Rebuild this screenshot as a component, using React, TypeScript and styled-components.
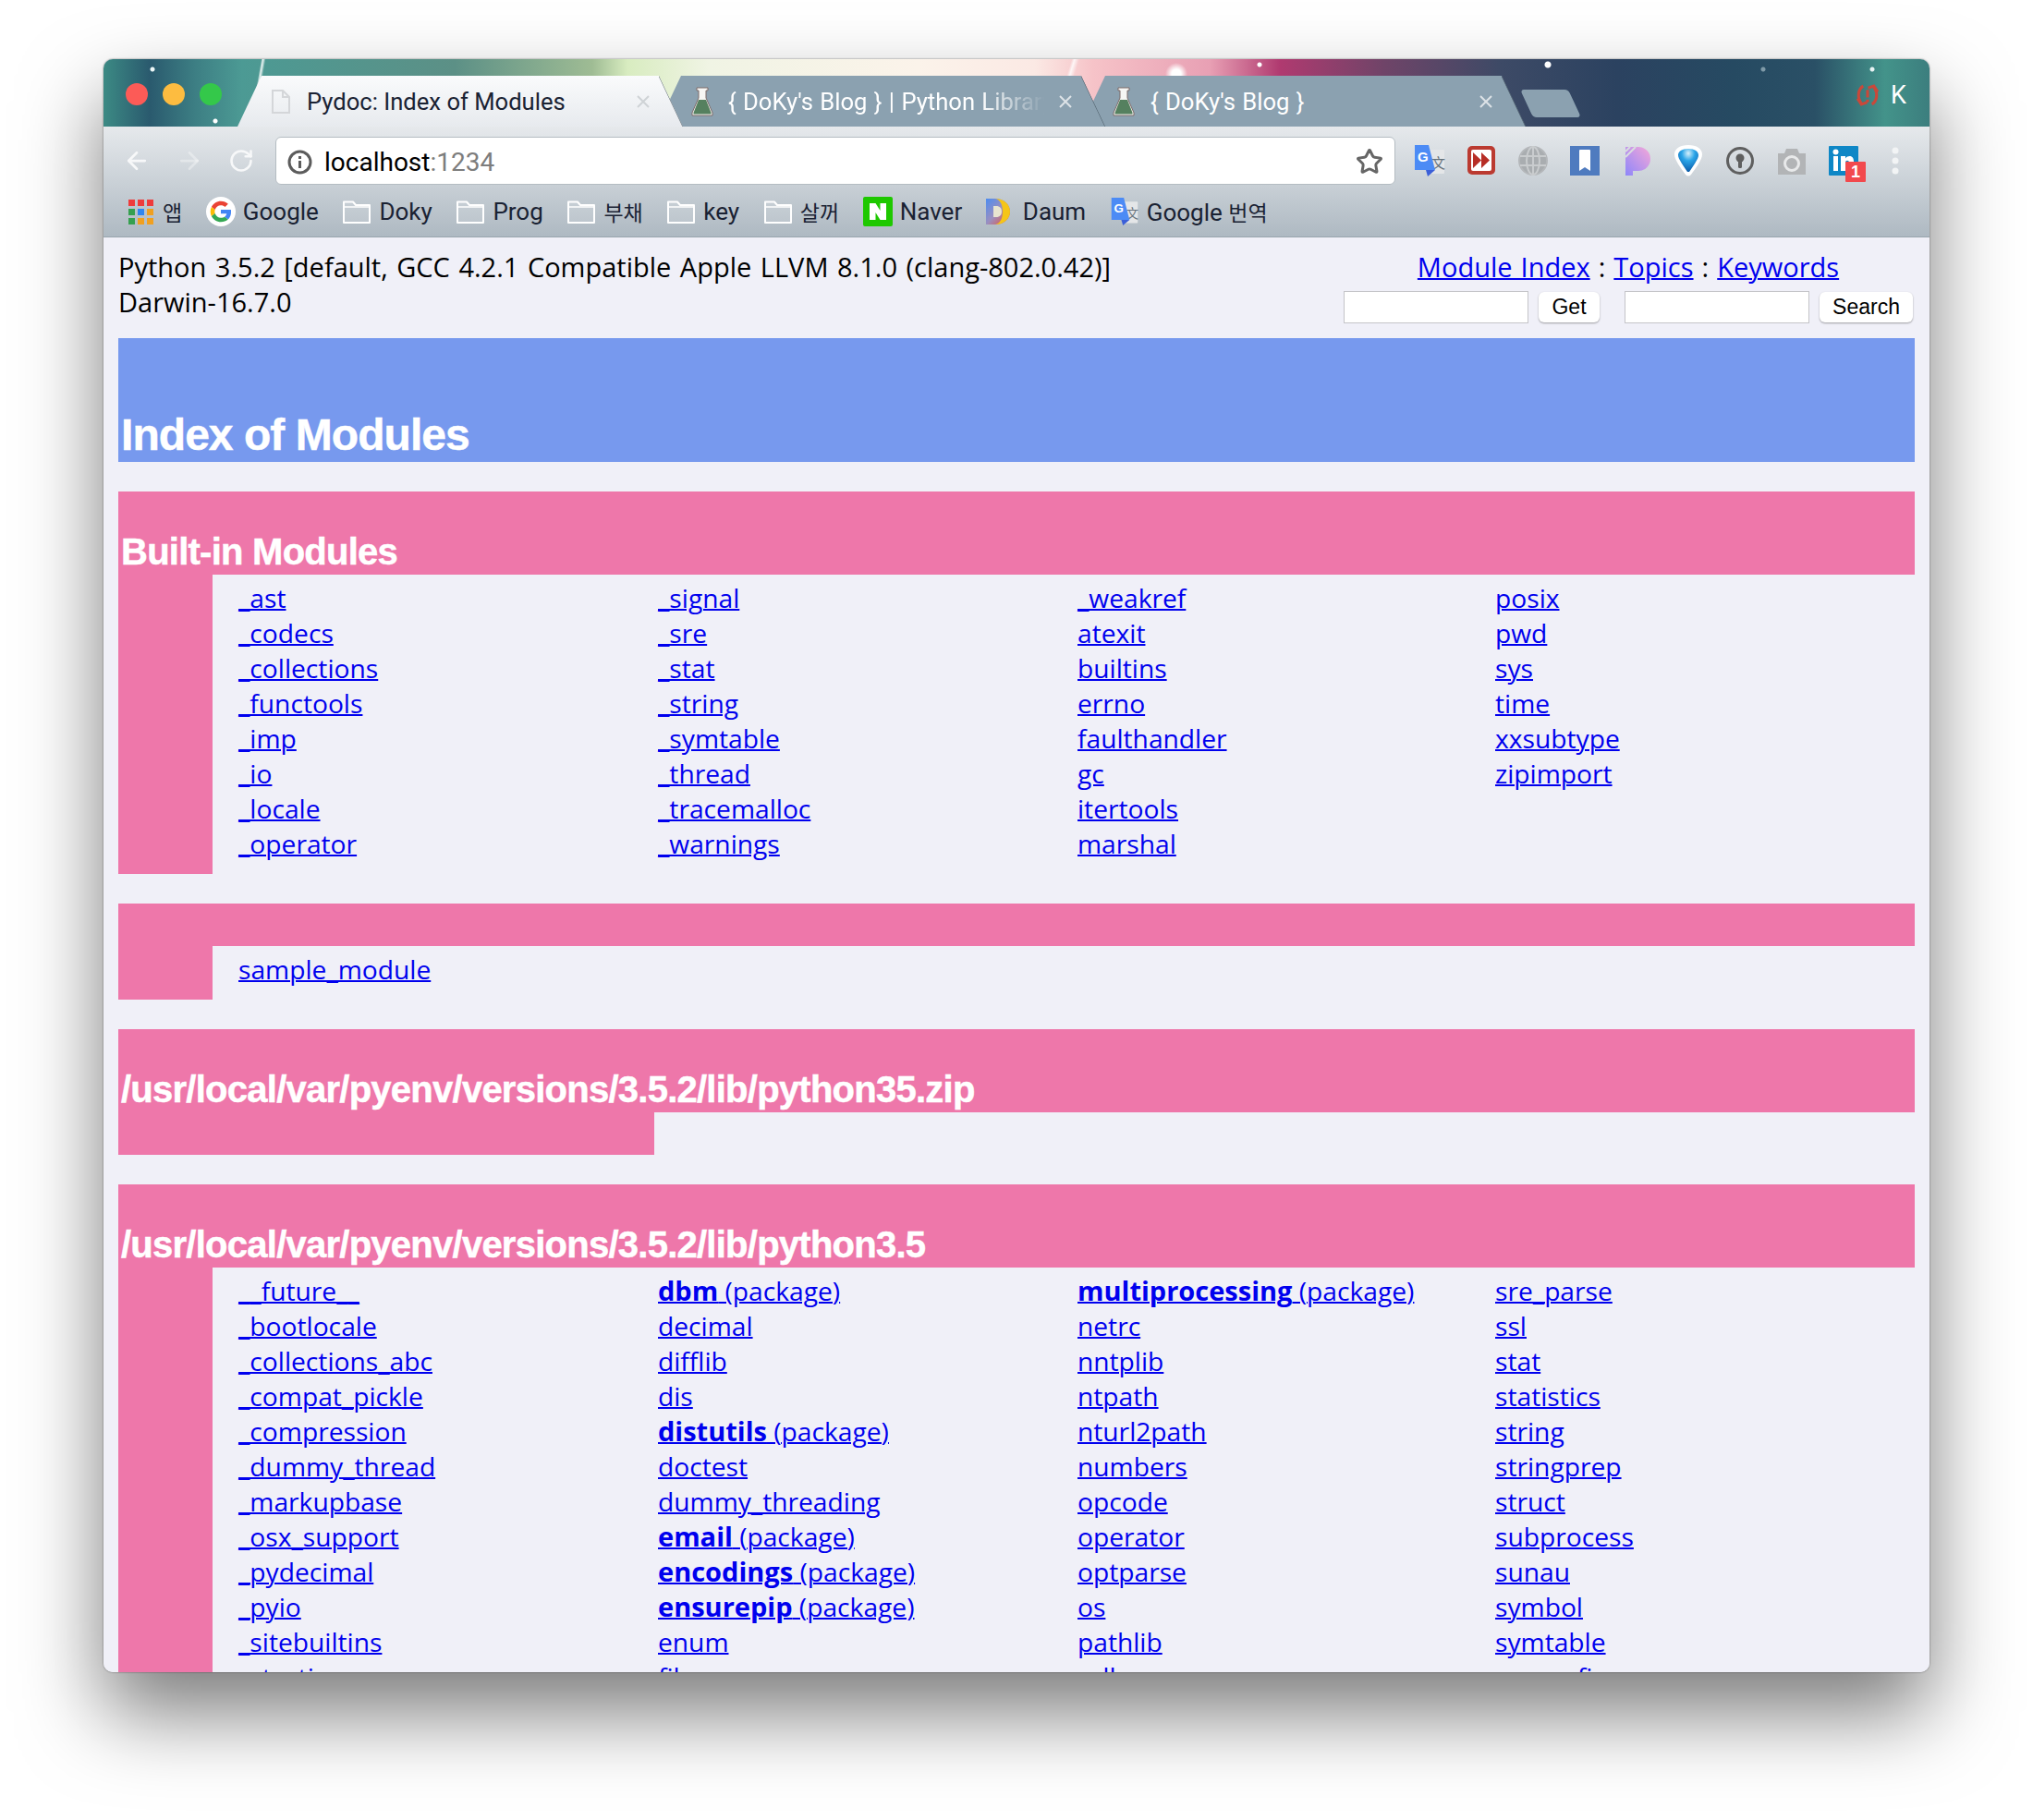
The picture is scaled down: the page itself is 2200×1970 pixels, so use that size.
import styled, { createGlobalStyle } from 'styled-components';
import { ArrowLeft, ArrowRight, RotateCw, Star } from 'lucide-react';

const GlobalStyle = createGlobalStyle`
  html, body {
    margin: 0;
    padding: 0;
    background: #fff;
  }
  #root {
    min-height: 1970px;
    overflow: hidden;
  }
`;

const BODY_FONT = `"Open Sans", "Noto Sans", sans-serif`;
const UI_FONT = `Roboto, "Noto Sans CJK KR", sans-serif`;
const HEAD_FONT = `"Liberation Sans", Arial, sans-serif`;

const Page = styled.div`
  padding: 64px 112px 0;
  height: 1970px;
  box-sizing: border-box;
`;

const Window = styled.div`
  width: 1976px;
  height: 1746px;
  border-radius: 10px;
  overflow: hidden;
  display: flex;
  flex-direction: column;
  background: #f0f0f8;
  box-shadow: 0 44px 88px rgba(0, 0, 0, 0.52), 0 0 2px rgba(0, 0, 0, 0.55);
`;

const TabStrip = styled.div`
  height: 73px;
  flex-shrink: 0;
  display: flex;
  align-items: flex-end;
  font-family: ${UI_FONT};
  background:
    radial-gradient(circle at 53px 11px, #eef8f8 0 2px, transparent 3px),
    radial-gradient(circle at 121px 67px, #fff 0 2px, transparent 3px),
    radial-gradient(circle at 1251px 6px, #fff 0 2px, transparent 3px),
    radial-gradient(circle at 1563px 6px, #fff 0 3px, transparent 4px),
    radial-gradient(circle at 1796px 11px, #7f9aa8 0 2px, transparent 3px),
    radial-gradient(circle at 1914px 11px, #e8f4f4 0 2px, transparent 3px),
    radial-gradient(circle at 1161px 16px, #fff 0 5px, transparent 12px),
    linear-gradient(100deg, transparent 168px, rgba(255, 255, 255, 0.9) 170px, transparent 173px),
    linear-gradient(107deg, transparent 1002px, rgba(255, 255, 255, 0.8) 1005px, transparent 1010px),
    linear-gradient(
      90deg,
      #3c8a84 0,
      #2a5a6e 50px,
      #3d7f84 100px,
      #4c9a94 150px,
      #5c9086 380px,
      #9fbc94 529px,
      #d8ecc0 567px,
      #f0f4e4 655px,
      #fbf3ea 882px,
      #fbe9e4 1008px,
      #f6c3c8 1071px,
      #e8a0b4 1197px,
      #b03a70 1273px,
      #6f4468 1386px,
      #3d4a66 1512px,
      #2b4260 1638px,
      #264a62 1764px,
      #2a5066 1852px,
      #43938a 1928px,
      #3c7e7e 1976px
    );
`;

const Lights = styled.div`
  display: flex;
  gap: 16px;
  margin: 26px 17px 0 24px;
  align-self: flex-start;
`;

const Light = styled.span<{ $color: string }>`
  width: 24px;
  height: 24px;
  border-radius: 50%;
  background: ${(p) => p.$color};
`;

const Tab = styled.div<{ $active?: boolean; $width: number; $layer: number; $overlap: number; $pad: number }>`
  position: relative;
  z-index: ${(p) => p.$layer};
  width: ${(p) => p.$width}px;
  height: 55px;
  margin-left: ${(p) => -p.$overlap}px;
  padding: 0 36px 0 ${(p) => p.$pad}px;
  box-sizing: border-box;
  flex-shrink: 0;
  display: flex;
  align-items: center;
  font-size: 25.6px;
  color: ${(p) => (p.$active ? '#1a2233' : '#fff')};
  background: ${(p) => (p.$active ? 'linear-gradient(#fafbfc, #e7eaee)' : '#8ba1b0')};
  clip-path: polygon(26px 0, calc(100% - 26px) 0, 100% 100%, 0 100%);

  &::after {
    content: '';
    position: absolute;
    top: 0;
    right: 0;
    width: 26px;
    height: 100%;
    background: linear-gradient(
      to bottom left,
      transparent calc(50% - 1px),
      rgba(50, 65, 75, 0.75) 50%,
      transparent calc(50% + 1px)
    );
  }
`;

const TabIcon = styled.span<{ $gap: number }>`
  display: flex;
  margin-right: ${(p) => p.$gap}px;
  flex-shrink: 0;
`;

const TabTitle = styled.span<{ $fade?: boolean; $wide?: boolean }>`
  flex: 1;
  min-width: 0;
  white-space: nowrap;
  overflow: hidden;
  word-spacing: ${(p) => (p.$wide ? '1px' : '0')};
  ${(p) =>
    p.$fade
      ? 'mask-image: linear-gradient(90deg, #000 78%, transparent 98%); -webkit-mask-image: linear-gradient(90deg, #000 78%, transparent 98%);'
      : ''}
`;

const CloseMark = styled.svg<{ $dim?: boolean }>`
  width: 14px;
  height: 14px;
  flex-shrink: 0;
  margin-left: 8px;
  stroke: ${(p) => (p.$dim ? '#cfd3d6' : '#dde3e7')};
  stroke-width: 2;
`;

const NewTab = styled.div`
  width: 52px;
  height: 30px;
  margin: 0 0 10px 1px;
  border-radius: 4px;
  background: #8ba1b0;
  transform: skewX(25deg);
  flex-shrink: 0;
`;

const Profile = styled.div`
  margin: 24px 25px 0 auto;
  align-self: flex-start;
  display: flex;
  align-items: center;
  gap: 12px;
  color: #fff;
  font-size: 27px;
  line-height: 30px;
`;

const Chrome = styled.div`
  height: 120px;
  flex-shrink: 0;
  box-sizing: border-box;
  border-bottom: 1px solid #98a4ad;
  background: linear-gradient(#e6e9ec, #aeb9c2);
  font-family: ${UI_FONT};
`;

const NavRow = styled.div`
  display: flex;
  align-items: center;
  height: 52px;
  padding: 11px 0 0 21px;
`;

const NavButtons = styled.div`
  display: flex;
  align-items: center;
  gap: 27px;
  margin-right: 23px;
`;

const AddressBar = styled.div`
  width: 1212px;
  height: 52px;
  box-sizing: border-box;
  flex-shrink: 0;
  display: flex;
  align-items: center;
  padding: 2px 12px 0 12px;
  border-radius: 6px;
  background: #fff;
  border: 1px solid #b4bcc2;
  font-size: 28px;
  color: #000;
`;

const InfoRing = styled.svg`
  width: 27px;
  height: 27px;
  margin-right: 13px;
  flex-shrink: 0;
`;

const Port = styled.span`
  color: #7d7d7d;
`;

const StarSlot = styled.span`
  margin-left: auto;
  display: flex;
`;

const Extensions = styled.div`
  display: flex;
  align-items: center;
  gap: 24px;
  margin-left: 21px;
`;

const ExtIcon = styled.svg`
  width: 32px;
  height: 36px;
  flex-shrink: 0;
  overflow: visible;
`;

const BookmarkRow = styled.div`
  display: flex;
  align-items: center;
  gap: 25.6px;
  height: 44px;
  margin-top: 7px;
  padding-left: 24px;
  font-size: 26px;
  color: #1a2233;
`;

const Bookmark = styled.div`
  display: flex;
  align-items: center;
  gap: 8px;
  white-space: nowrap;
`;

const Hangul = styled.span`
  font-family: "Noto Sans CJK KR", sans-serif;
  font-size: 23px;
`;

const BookmarkIcon = styled.svg`
  width: 32px;
  height: 32px;
  flex-shrink: 0;
`;

const Content = styled.div`
  flex: 1;
  min-height: 0;
  overflow: hidden;
  padding: 13px 16px 0;
  background: #f0f0f8;
  font-family: ${BODY_FONT};
  font-size: 28.2px;
  line-height: 38px;
  color: #000;

  a {
    color: #0000ee;
    text-decoration: underline;
    text-decoration-thickness: 2px;
  }
`;

const TopBar = styled.div`
  display: flex;
  justify-content: space-between;
  height: 76px;
  margin-bottom: 20px;
  font-size: 29px;
`;

const VersionInfo = styled.div`
  word-spacing: 2px;
`;

const SearchArea = styled.div`
  display: flex;
  flex-direction: column;
  align-items: center;
  margin-right: 2px;
`;

const Links = styled.div`
  white-space: nowrap;
  word-spacing: 1.5px;
`;

const SearchForms = styled.div`
  display: flex;
  align-items: center;
  margin-top: 7px;
  font-family: ${HEAD_FONT};
`;

const SearchInput = styled.div`
  width: 200px;
  height: 35px;
  box-sizing: border-box;
  background: #fff;
  border: 1px solid #c4c4c8;
`;

const SearchButton = styled.div<{ $width: number; $after: number }>`
  width: ${(p) => p.$width}px;
  height: 33px;
  box-sizing: border-box;
  margin: 0 ${(p) => p.$after}px 0 11px;
  background: #fff;
  border-radius: 6px;
  box-shadow: 0 1px 2px rgba(0, 0, 0, 0.35);
  font-size: 23px;
  line-height: 33px;
  text-align: center;
`;

const Band = styled.div<{ $color: string; $height: number }>`
  display: flex;
  align-items: flex-end;
  height: ${(p) => p.$height}px;
  padding-left: 3px;
  background: ${(p) => p.$color};
  font-family: ${HEAD_FONT};
  font-weight: bold;
  color: #fff;
  -webkit-text-stroke: 0.5px #fff;
`;

const PageTitle = styled.h1`
  margin: 0;
  font-size: 48px;
  line-height: 58px;
  letter-spacing: -0.95px;
`;

const SectionTitle = styled.h2`
  margin: 0 0 1px;
  font-size: 40px;
  line-height: 48px;
  letter-spacing: -0.75px;
`;

const Section = styled.section`
  margin-top: 32px;
`;

const SectionBody = styled.div`
  display: flex;
`;

const Gutter = styled.div`
  width: 102px;
  flex-shrink: 0;
  background: #ee77aa;
`;

const ModuleGrid = styled.div`
  flex: 1;
  display: grid;
  grid-template-columns: 454px 454px 452px 1fr;
  padding: 6px 0 14px 28px;

  strong {
    font-size: 29px;
  }
`;

const ModuleColumn = styled.div`
  display: flex;
  flex-direction: column;
  align-items: flex-start;
`;

const EmptyBlock = styled.div`
  width: 580px;
  height: 46px;
  background: #ee77aa;
`;

const FolderIcon = () => (
  <BookmarkIcon viewBox="0 0 32 32">
    <path
      d="M2 5.5 h10 l3 3.5 h15 v19 h-28 z"
      fill="rgba(255,255,255,0.12)"
      stroke="#fff"
      strokeWidth="2"
      strokeLinejoin="round"
    />
    <path d="M2 11 h28" stroke="#fff" strokeWidth="1.5" />
  </BookmarkIcon>
);

const AppsIcon = () => {
  const colors = ['#ee3b3b', '#ee3b3b', '#ee3b3b', '#35a04f', '#2f86f0', '#f0a020', '#35a04f', '#f0a020', '#f0a020'];
  return (
    <BookmarkIcon viewBox="0 0 32 32">
      {colors.map((c, i) => (
        <rect key={i} x={3 + (i % 3) * 10} y={3 + Math.floor(i / 3) * 10} width="7" height="7" fill={c} />
      ))}
    </BookmarkIcon>
  );
};

const GoogleIcon = () => (
  <BookmarkIcon viewBox="0 0 48 48">
    <circle cx="24" cy="24" r="24" fill="#fff" />
    <path fill="#EA4335" d="M24 14c2.8 0 5 1 6.8 2.6l5-5C32.700 8.800 28.700 7 24 7 17.300 7 11.600 10.800 8.800 16.400l5.800 4.500C16 17 19.700 14 24 14z" />
    <path fill="#4285F4" d="M40.600 24.400c0-1.300-.1-2.300-.3-3.400H24v6.500h9.400c-.4 2.100-1.600 3.900-3.400 5.100l5.600 4.300c3.200-3 5-7.400 5-12.500z" />
    <path fill="#FBBC05" d="M14.600 27.100c-.4-1-.6-2-.6-3.100s.2-2.100.6-3.100l-5.800-4.500C7.600 18.700 7 21.300 7 24s.6 5.300 1.800 7.600l5.800-4.500z" />
    <path fill="#34A853" d="M24 41c4.600 0 8.500-1.500 11.600-4.100L30 32.600c-1.600 1-3.600 1.700-6 1.700-4.300 0-8-2.900-9.400-7.200l-5.800 4.500C11.600 37.200 17.300 41 24 41z" />
  </BookmarkIcon>
);

const NaverIcon = () => (
  <BookmarkIcon viewBox="0 0 32 32">
    <rect width="32" height="32" rx="2" fill="#1ec800" />
    <path d="M7 7 h6.500 l5 8 v-8 h6.500 v18 h-6.500 l-5 -8 v8 h-6.500 z" fill="#fff" />
  </BookmarkIcon>
);

const DaumIcon = () => (
  <BookmarkIcon viewBox="0 0 32 32">
    <defs>
      <linearGradient id="daum" x1="0" y1="0" x2="1" y2="1">
        <stop offset="0" stopColor="#4d8cf0" />
        <stop offset="0.5" stopColor="#9a8fc0" />
        <stop offset="1" stopColor="#f04a30" />
      </linearGradient>
    </defs>
    <path d="M0 2 h10 c9 0 16 6 16 14 s-7 14 -16 14 h-10 z" fill="url(#daum)" />
    <path d="M10 2 c9 0 16 6 16 14 s-7 14 -16 14 c5 -1 8 -6 8 -14 s-3 -13 -8 -14z" fill="#f5c518" />
    <path d="M8 10 h3 c4 0 6 2.500 6 6 s-2 6 -6 6 h-3 z" fill="#e8e4d0" />
  </BookmarkIcon>
);

const TranslateGlyph = () => (
  <g>
    <rect x="13" y="6" width="19" height="26" rx="1" fill="#e4e6e8" />
    <text x="18" y="26" fontSize="15" fill="#66727c" fontFamily="Noto Sans CJK SC, sans-serif">文</text>
    <path d="M0 1 h15 l7 27 h-22 z" fill="#4c8bf5" />
    <path d="M12 28 h10 l-8 7 z" fill="#3b5fd8" />
    <text x="3" y="19" fontSize="15" fontWeight="bold" fill="#fff" fontFamily="Liberation Sans, sans-serif">G</text>
  </g>
);

const FlaskIcon = () => (
  <svg width="24" height="32" viewBox="0 0 24 32">
    <path d="M6 1 h12 v3 h-2 v8 l7 16 v3 h-22 v-3 l7 -16 v-8 h-2 z" fill="#f6f6f4" stroke="#7d6a68" strokeWidth="1" />
    <path d="M8 14 h8 l5.500 14 v1.500 h-19 v-1.500 z" fill="#55805f" />
  </svg>
);

const DocIcon = () => (
  <svg width="20" height="26" viewBox="0 0 20 26" fill="none" stroke="#d4d6d9" strokeWidth="2">
    <path d="M1 1 h11 l7 7 v17 h-18 z" />
    <path d="M12 1 v7 h7" />
  </svg>
);

const CloseIcon = ({ dim }: { dim?: boolean }) => (
  <CloseMark $dim={dim} viewBox="0 0 14 14">
    <path d="M1 1 L13 13 M13 1 L1 13" />
  </CloseMark>
);

const SyncAlert = () => (
  <svg width="26" height="26" viewBox="0 0 25 25" fill="none" stroke="#c9483a" strokeWidth="3">
    <path d="M8 3 C3 6 1 14 6 21" />
    <path d="M17 22 C22 19 24 11 19 4" />
    <path d="M2 16 l4 6 6 -2" />
    <path d="M23 9 l-4 -6 -6 2" />
    <path d="M12.500 7 v8 M12.500 17 v3" />
  </svg>
);

const RedPlay = () => (
  <ExtIcon viewBox="0 0 32 36">
    <rect x="1" y="2" width="30" height="31" rx="5" fill="#bb3a30" />
    <rect x="5" y="6" width="22" height="23" rx="2" fill="#fff" />
    <path d="M7 9 l9 8.500 -9 8.500 z M16 9 l9 8.500 -9 8.500 z" fill="#b72e26" />
  </ExtIcon>
);

const GlobeIcon = () => (
  <ExtIcon viewBox="0 0 32 36" fill="none" stroke="#b4b7ba" strokeWidth="2">
    <circle cx="16" cy="18" r="15" fill="#a9adb0" />
    <ellipse cx="16" cy="18" rx="7" ry="15" stroke="#c9ccce" />
    <path d="M16 3 v30 M2 13 h28 M2 23 h28" stroke="#c9ccce" />
  </ExtIcon>
);

const BookmarkExt = () => (
  <ExtIcon viewBox="0 0 32 36">
    <rect y="2" width="32" height="32" fill="#4f7bbf" />
    <path d="M10 7 q0 -1 1 -1 h10 q1 0 1 1 v22 l-6 -4 -6 4 z" fill="#fff" />
  </ExtIcon>
);

const PocketLike = () => (
  <ExtIcon viewBox="0 0 32 36">
    <defs>
      <linearGradient id="pk" x1="1" y1="0" x2="0" y2="1">
        <stop offset="0" stopColor="#f5a8d8" />
        <stop offset="1" stopColor="#8e86fa" />
      </linearGradient>
    </defs>
    <path d="M4 3 h14 a13 13 0 0 1 0 26 h-6 v5 h-8 z" fill="url(#pk)" />
    <path d="M4 14 L15 3 M4 8 L9 3" stroke="#d9dde0" strokeWidth="2" />
  </ExtIcon>
);

const DiamondIcon = () => (
  <ExtIcon viewBox="0 0 32 36">
    <defs>
      <radialGradient id="dm" cx="0.5" cy="0.2" r="0.8">
        <stop offset="0" stopColor="#d7f0fb" />
        <stop offset="0.4" stopColor="#2aa5e8" />
        <stop offset="1" stopColor="#0b5aa8" />
      </radialGradient>
    </defs>
    <path d="M16 1 c9 0 15 4 15 10 c0 6 -7 15 -12 22 q-3 3 -6 0 c-5 -7 -12 -16 -12 -22 c0 -6 6 -10 15 -10z" fill="#fff" />
    <path d="M16 5 c7 0 11 3 11 7 c0 4 -6 12 -10 18 h-2 c-4 -6 -10 -14 -10 -18 c0 -4 4 -7 11 -7z" fill="url(#dm)" />
  </ExtIcon>
);

const KeyholeIcon = () => (
  <ExtIcon viewBox="0 0 32 36">
    <circle cx="16" cy="18" r="13.500" fill="none" stroke="#5f5f5f" strokeWidth="3" />
    <circle cx="16" cy="15" r="4.500" fill="#5f5f5f" />
    <rect x="14" y="16" width="4" height="10" rx="1.500" fill="#5f5f5f" />
  </ExtIcon>
);

const CameraIcon = () => (
  <ExtIcon viewBox="0 0 32 36">
    <path d="M1 10 h7 l2 -5 h12 l2 5 h7 v23 h-30 z" fill="#b2b4b6" />
    <circle cx="16" cy="21" r="7.500" fill="none" stroke="#e8e9ea" strokeWidth="3" />
  </ExtIcon>
);

const LinkedInIcon = () => (
  <ExtIcon viewBox="0 0 32 36">
    <rect y="2" width="32" height="32" rx="1" fill="#0e87c6" />
    <rect x="5" y="13" width="5" height="16" fill="#fff" />
    <circle cx="7.500" cy="8.500" r="3" fill="#fff" />
    <path d="M13 13 h5 v2.500 c3 -4 9 -3 9 3 v10.500 h-5 v-9 c0 -3 -4 -3 -4 0 v9 h-5 z" fill="#fff" />
    <rect x="18" y="19" width="22" height="22" rx="1" fill="#f2494d" />
    <text x="29" y="36" fontSize="18" fontWeight="bold" textAnchor="middle" fill="#fff" fontFamily="Liberation Sans, sans-serif">1</text>
  </ExtIcon>
);

const DotsIcon = () => (
  <ExtIcon viewBox="0 0 32 36">
    <circle cx="16" cy="7" r="3.500" fill="#f2f4f5" />
    <circle cx="16" cy="18" r="3.500" fill="#f2f4f5" />
    <circle cx="16" cy="29" r="3.500" fill="#f2f4f5" />
  </ExtIcon>
);

type Mod = string | { pkg: string };
const pkg = (name: string): Mod => ({ pkg: name });

const builtinColumns: Mod[][] = [
  ['_ast', '_codecs', '_collections', '_functools', '_imp', '_io', '_locale', '_operator'],
  ['_signal', '_sre', '_stat', '_string', '_symtable', '_thread', '_tracemalloc', '_warnings'],
  ['_weakref', 'atexit', 'builtins', 'errno', 'faulthandler', 'gc', 'itertools', 'marshal'],
  ['posix', 'pwd', 'sys', 'time', 'xxsubtype', 'zipimport'],
];

const libColumns: Mod[][] = [
  ['__future__', '_bootlocale', '_collections_abc', '_compat_pickle', '_compression', '_dummy_thread', '_markupbase', '_osx_support', '_pydecimal', '_pyio', '_sitebuiltins', '_strptime'],
  [pkg('dbm'), 'decimal', 'difflib', 'dis', pkg('distutils'), 'doctest', 'dummy_threading', pkg('email'), pkg('encodings'), pkg('ensurepip'), 'enum', 'filecmp'],
  [pkg('multiprocessing'), 'netrc', 'nntplib', 'ntpath', 'nturl2path', 'numbers', 'opcode', 'operator', 'optparse', 'os', 'pathlib', 'pdb'],
  ['sre_parse', 'ssl', 'stat', 'statistics', 'string', 'stringprep', 'struct', 'subprocess', 'sunau', 'symbol', 'symtable', 'sysconfig'],
];

const Modules = ({ columns }: { columns: Mod[][] }) => (
  <SectionBody>
    <Gutter />
    <ModuleGrid>
      {columns.map((col, i) => (
        <ModuleColumn key={i}>
          {col.map((m) =>
            typeof m === 'string' ? (
              <a key={m} href="#">{m}</a>
            ) : (
              <a key={m.pkg} href="#"><strong>{m.pkg}</strong> (package)</a>
            ),
          )}
        </ModuleColumn>
      ))}
    </ModuleGrid>
  </SectionBody>
);

export default function App() {
  return (
    <Page>
      <GlobalStyle />
      <Window>
        <TabStrip>
          <Lights>
            <Light $color="#fc5b57" />
            <Light $color="#fdbc40" />
            <Light $color="#34c84a" />
          </Lights>
          <Tab $active $width={482} $layer={3} $overlap={0} $pad={37}>
            <TabIcon $gap={18}><DocIcon /></TabIcon>
            <TabTitle>Pydoc: Index of Modules</TabTitle>
            <CloseIcon dim />
          </Tab>
          <Tab $width={485} $layer={2} $overlap={28} $pad={37}>
            <TabIcon $gap={16}><FlaskIcon /></TabIcon>
            <TabTitle $fade $wide>{"{ DoKy's Blog } | Python Library"}</TabTitle>
            <CloseIcon />
          </Tab>
          <Tab $width={481} $layer={1} $overlap={26} $pad={34}>
            <TabIcon $gap={17}><FlaskIcon /></TabIcon>
            <TabTitle $wide>{"{ DoKy's Blog }"}</TabTitle>
            <CloseIcon />
          </Tab>
          <NewTab />
          <Profile>
            <SyncAlert />
            <span>K</span>
          </Profile>
        </TabStrip>

        <Chrome>
          <NavRow>
            <NavButtons>
              <ArrowLeft size={30} color="#f7f8f9" strokeWidth={2.2} />
              <ArrowRight size={30} color="rgba(255,255,255,0.35)" strokeWidth={2.2} />
              <RotateCw size={28} color="#f7f8f9" strokeWidth={2.2} />
            </NavButtons>
            <AddressBar>
              <InfoRing viewBox="0 0 27 27">
                <circle cx="13.500" cy="13.500" r="11.500" fill="none" stroke="#5c5c5c" strokeWidth="3" />
                <rect x="12" y="12" width="3" height="8" fill="#5c5c5c" />
                <rect x="12" y="7" width="3" height="3" fill="#5c5c5c" />
              </InfoRing>
              <span>localhost<Port>:1234</Port></span>
              <StarSlot><Star size={30} color="#666" strokeWidth={2.4} /></StarSlot>
            </AddressBar>
            <Extensions>
              <ExtIcon viewBox="0 0 32 36"><TranslateGlyph /></ExtIcon>
              <RedPlay />
              <GlobeIcon />
              <BookmarkExt />
              <PocketLike />
              <DiamondIcon />
              <KeyholeIcon />
              <CameraIcon />
              <LinkedInIcon />
              <DotsIcon />
            </Extensions>
          </NavRow>
          <BookmarkRow>
            <Bookmark><AppsIcon /><Hangul>앱</Hangul></Bookmark>
            <Bookmark><GoogleIcon />Google</Bookmark>
            <Bookmark><FolderIcon />Doky</Bookmark>
            <Bookmark><FolderIcon />Prog</Bookmark>
            <Bookmark><FolderIcon /><Hangul>부채</Hangul></Bookmark>
            <Bookmark><FolderIcon />key</Bookmark>
            <Bookmark><FolderIcon /><Hangul>살꺼</Hangul></Bookmark>
            <Bookmark><NaverIcon />Naver</Bookmark>
            <Bookmark><DaumIcon />Daum</Bookmark>
            <Bookmark>
              <BookmarkIcon viewBox="0 0 32 36"><TranslateGlyph /></BookmarkIcon>
              <span>Google <Hangul>번역</Hangul></span>
            </Bookmark>
          </BookmarkRow>
        </Chrome>

        <Content>
          <TopBar>
            <VersionInfo>
              Python 3.5.2 [default, GCC 4.2.1 Compatible Apple LLVM 8.1.0 (clang-802.0.42)]
              <br />
              Darwin-16.7.0
            </VersionInfo>
            <SearchArea>
              <Links>
                <a href="#">Module Index</a> : <a href="#">Topics</a> : <a href="#">Keywords</a>
              </Links>
              <SearchForms>
                <SearchInput />
                <SearchButton $width={66} $after={27}>Get</SearchButton>
                <SearchInput />
                <SearchButton $width={101} $after={0}>Search</SearchButton>
              </SearchForms>
            </SearchArea>
          </TopBar>

          <Band $color="#7799ee" $height={134}>
            <PageTitle>Index of Modules</PageTitle>
          </Band>

          <Section>
            <Band $color="#ee77aa" $height={90}>
              <SectionTitle>Built-in Modules</SectionTitle>
            </Band>
            <Modules columns={builtinColumns} />
          </Section>

          <Section>
            <Band $color="#ee77aa" $height={46} />
            <Modules columns={[['sample_module']]} />
          </Section>

          <Section>
            <Band $color="#ee77aa" $height={90}>
              <SectionTitle>/usr/local/var/pyenv/versions/3.5.2/lib/python35.zip</SectionTitle>
            </Band>
            <EmptyBlock />
          </Section>

          <Section>
            <Band $color="#ee77aa" $height={90}>
              <SectionTitle>/usr/local/var/pyenv/versions/3.5.2/lib/python3.5</SectionTitle>
            </Band>
            <Modules columns={libColumns} />
          </Section>
        </Content>
      </Window>
    </Page>
  );
}
